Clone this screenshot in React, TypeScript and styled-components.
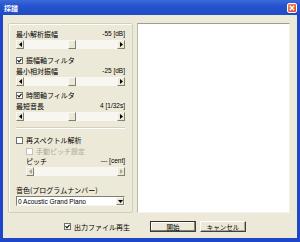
import React from "react";
import styled, { createGlobalStyle } from "styled-components";

const Global = createGlobalStyle`
  html, body { margin: 0; padding: 0; background: #ffffff; }
  body { font-family: "Noto Sans CJK JP", "Liberation Sans", sans-serif; }
`;

const FONT = `"Noto Sans CJK JP", "Liberation Sans", sans-serif`;

const Window = styled.div`
  width: 300px;
  height: 242px;
  box-sizing: border-box;
  display: flex;
  flex-direction: column;
  background: #ece9d8;
  border-left: 3px solid #1d47c8;
  border-right: 3px solid #1d47c8;
  border-bottom: 4px solid #1d47c8;
  font-family: ${FONT};
`;

const TitleBar = styled.div`
  height: 15px;
  margin: 0 -3px;
  padding: 0 3px 0 4px;
  display: flex;
  align-items: center;
  justify-content: space-between;
  background: linear-gradient(180deg, #3a6ad8 0%, #2553cf 40%, #1f4cc4 100%);
  color: #ffffff;
  font-size: 7px;
  font-weight: bold;
  flex-shrink: 0;
`;

const CloseBtn = styled.div`
  width: 10px;
  height: 10px;
  border-radius: 2px;
  background: linear-gradient(135deg, #f08a68, #d9441c);
  border: 1px solid #ffffff;
  box-sizing: border-box;
  display: flex;
  align-items: center;
  justify-content: center;
`;

const Content = styled.div`
  flex: 1;
  display: flex;
  flex-direction: column;
  padding: 8px 7px 0 5px;
`;

const MainRow = styled.div`
  display: flex;
  gap: 4px;
  height: 190px;
`;

const Panel = styled.div`
  width: 125px;
  box-sizing: border-box;
  border: 1px solid #d0d0bf;
  border-radius: 2px;
  box-shadow: inset 1px 1px 0 #ffffff;
  padding: 0 7px 0 7px;
  display: flex;
  flex-direction: column;
`;

const ListBox = styled.div`
  width: 153px;
  box-sizing: border-box;
  background: #ffffff;
  border-top: 1px solid #9d9d93;
  border-left: 1px solid #b8b8ad;
  border-right: 1px solid #f4f3ee;
  border-bottom: 1px solid #f4f3ee;
`;

const LabelRow = styled.div<{ $mt: number; $indent?: number }>`
  margin-top: ${(p) => p.$mt}px;
  padding-left: ${(p) => p.$indent || 0}px;
  height: 8px;
  display: flex;
  align-items: center;
  justify-content: space-between;
  font-size: 7px;
  line-height: 8px;
  color: #000000;
  white-space: nowrap;
`;

const Value = styled.span`
  font-family: "Liberation Sans", sans-serif;
  font-size: 6.5px;
`;

const SliderBox = styled.div<{ $mt: number; $indent?: number }>`
  margin-top: ${(p) => p.$mt}px;
  margin-left: ${(p) => p.$indent || 0}px;
  height: 9px;
  display: flex;
  background: #f7f6f1;
  position: relative;
`;

const ArrowBtn = styled.div<{ $disabled?: boolean }>`
  width: 8px;
  height: 9px;
  box-sizing: border-box;
  background: #ece9d8;
  border-top: 1px solid #f8f8f4;
  border-left: 1px solid #f8f8f4;
  border-right: 1px solid #808070;
  border-bottom: 1px solid #808070;
  display: flex;
  align-items: center;
  justify-content: center;
  color: ${(p) => (p.$disabled ? "#aca899" : "#000000")};
`;

const Track = styled.div`
  flex: 1;
  position: relative;
`;

const Thumb = styled.div<{ $at: number }>`
  position: absolute;
  top: 0;
  left: ${(p) => p.$at}px;
  width: 8px;
  height: 9px;
  box-sizing: border-box;
  background: #ece9d8;
  border-top: 1px solid #f8f8f4;
  border-left: 1px solid #f8f8f4;
  border-right: 1px solid #808070;
  border-bottom: 1px solid #808070;
`;

const CheckRow = styled.div<{ $mt: number; $indent?: number; $disabled?: boolean }>`
  margin-top: ${(p) => p.$mt}px;
  padding-left: ${(p) => p.$indent || 0}px;
  height: 8px;
  display: flex;
  align-items: center;
  gap: 3px;
  font-size: 7px;
  color: ${(p) => (p.$disabled ? "#aca899" : "#000000")};
  white-space: nowrap;
`;

const Box = styled.div<{ $disabled?: boolean }>`
  width: 7px;
  height: 7px;
  box-sizing: border-box;
  background: #ffffff;
  border: 1px solid ${(p) => (p.$disabled ? "#c6c3b6" : "#6f6f6f")};
  display: flex;
  align-items: center;
  justify-content: center;
`;

const Separator = styled.div<{ $mt: number }>`
  margin-top: ${(p) => p.$mt}px;
  height: 0;
  border-top: 1px solid #d0d0bf;
  border-bottom: 1px solid #ffffff;
`;

const Combo = styled.div<{ $mt: number }>`
  margin-top: ${(p) => p.$mt}px;
  height: 10px;
  box-sizing: border-box;
  background: #ffffff;
  border-top: 1px solid #808070;
  border-left: 1px solid #808070;
  border-right: 1px solid #f4f3ee;
  border-bottom: 1px solid #f4f3ee;
  display: flex;
  align-items: center;
  justify-content: space-between;
  font-family: "Liberation Sans", sans-serif;
  font-size: 6.5px;
  padding-left: 1px;
`;

const ComboBtn = styled(ArrowBtn)`
  height: 8px;
`;

const Footer = styled.div`
  flex: 1;
  display: flex;
  align-items: center;
  padding-left: 56px;
  padding-top: 2px;
`;

const FooterCheck = styled(CheckRow)`
  margin-top: 0;
  width: 86px;
`;

const Button = styled.div<{ $default?: boolean }>`
  width: 46px;
  height: 11px;
  box-sizing: border-box;
  margin-right: 4px;
  background: #ece9d8;
  border-top: 1px solid ${(p) => (p.$default ? "#303030" : "#ffffff")};
  border-left: 1px solid ${(p) => (p.$default ? "#303030" : "#ffffff")};
  border-right: 1px solid #404040;
  border-bottom: 1px solid #404040;
  box-shadow: ${(p) =>
    p.$default ? "inset -1px -1px 0 #808070, inset 1px 1px 0 #ffffff" : "inset -1px -1px 0 #aca899"};
  display: flex;
  align-items: center;
  justify-content: center;
  font-size: 6.5px;
  color: #000000;
`;

const Tri = ({ dir }: { dir: "l" | "r" | "d" }) => {
  const pts = dir === "l" ? "3,0 0,2.5 3,5" : dir === "r" ? "0,0 3,2.5 0,5" : "0,0 5,0 2.5,3";
  const w = dir === "d" ? 5 : 3;
  const h = dir === "d" ? 3 : 5;
  return (
    <svg width={w} height={h} viewBox={`0 0 ${w} ${h}`}>
      <polygon points={pts} fill="currentColor" />
    </svg>
  );
};

const Check = () => (
  <svg width="5" height="5" viewBox="0 0 5 5">
    <polyline points="0.5,2.2 2,3.8 4.5,0.8" fill="none" stroke="#111111" strokeWidth="1.2" />
  </svg>
);

const Slider = ({ mt, at, indent, disabled }: { mt: number; at?: number; indent?: number; disabled?: boolean }) => (
  <SliderBox $mt={mt} $indent={indent}>
    <ArrowBtn $disabled={disabled}>
      <Tri dir="l" />
    </ArrowBtn>
    <Track>{at !== undefined && <Thumb $at={at} />}</Track>
    <ArrowBtn $disabled={disabled}>
      <Tri dir="r" />
    </ArrowBtn>
  </SliderBox>
);

export default function App() {
  return (
    <>
      <Global />
      <Window>
        <TitleBar>
          <span>採譜</span>
          <CloseBtn>
            <svg width="6" height="6" viewBox="0 0 6 6">
              <path d="M0.8 0.8 L5.2 5.2 M5.2 0.8 L0.8 5.2" stroke="#ffffff" strokeWidth="1.3" />
            </svg>
          </CloseBtn>
        </TitleBar>
        <Content>
          <MainRow>
            <Panel>
              <LabelRow $mt={6}>
                <span>最小解析振幅</span>
                <Value>-55 [dB]</Value>
              </LabelRow>
              <Slider mt={2} at={44} />
              <CheckRow $mt={7}>
                <Box>
                  <Check />
                </Box>
                <span>振幅軸フィルタ</span>
              </CheckRow>
              <LabelRow $mt={3}>
                <span>最小相対振幅</span>
                <Value>-25 [dB]</Value>
              </LabelRow>
              <Slider mt={2} at={44} />
              <CheckRow $mt={5}>
                <Box>
                  <Check />
                </Box>
                <span>時間軸フィルタ</span>
              </CheckRow>
              <LabelRow $mt={3}>
                <span>最短音長</span>
                <Value>4 [1/32s]</Value>
              </LabelRow>
              <Slider mt={2} at={44} />
              <Separator $mt={6} />
              <CheckRow $mt={7}>
                <Box />
                <span>再スペクトル解析</span>
              </CheckRow>
              <CheckRow $mt={3} $indent={10} $disabled>
                <Box $disabled />
                <span>手動ピッチ設定</span>
              </CheckRow>
              <LabelRow $mt={2} $indent={10}>
                <span>ピッチ</span>
                <Value>--- [cent]</Value>
              </LabelRow>
              <Slider mt={2} indent={10} disabled />
              <LabelRow $mt={10}>
                <span>音色(プログラムナンバー)</span>
              </LabelRow>
              <Combo $mt={2}>
                <span>0 Acoustic Grand Piano</span>
                <ComboBtn>
                  <Tri dir="d" />
                </ComboBtn>
              </Combo>
            </Panel>
            <ListBox />
          </MainRow>
          <Footer>
            <FooterCheck $mt={0}>
              <Box>
                <Check />
              </Box>
              <span>出力ファイル再生</span>
            </FooterCheck>
            <Button $default>開始</Button>
            <Button>キャンセル</Button>
          </Footer>
        </Content>
      </Window>
    </>
  );
}
